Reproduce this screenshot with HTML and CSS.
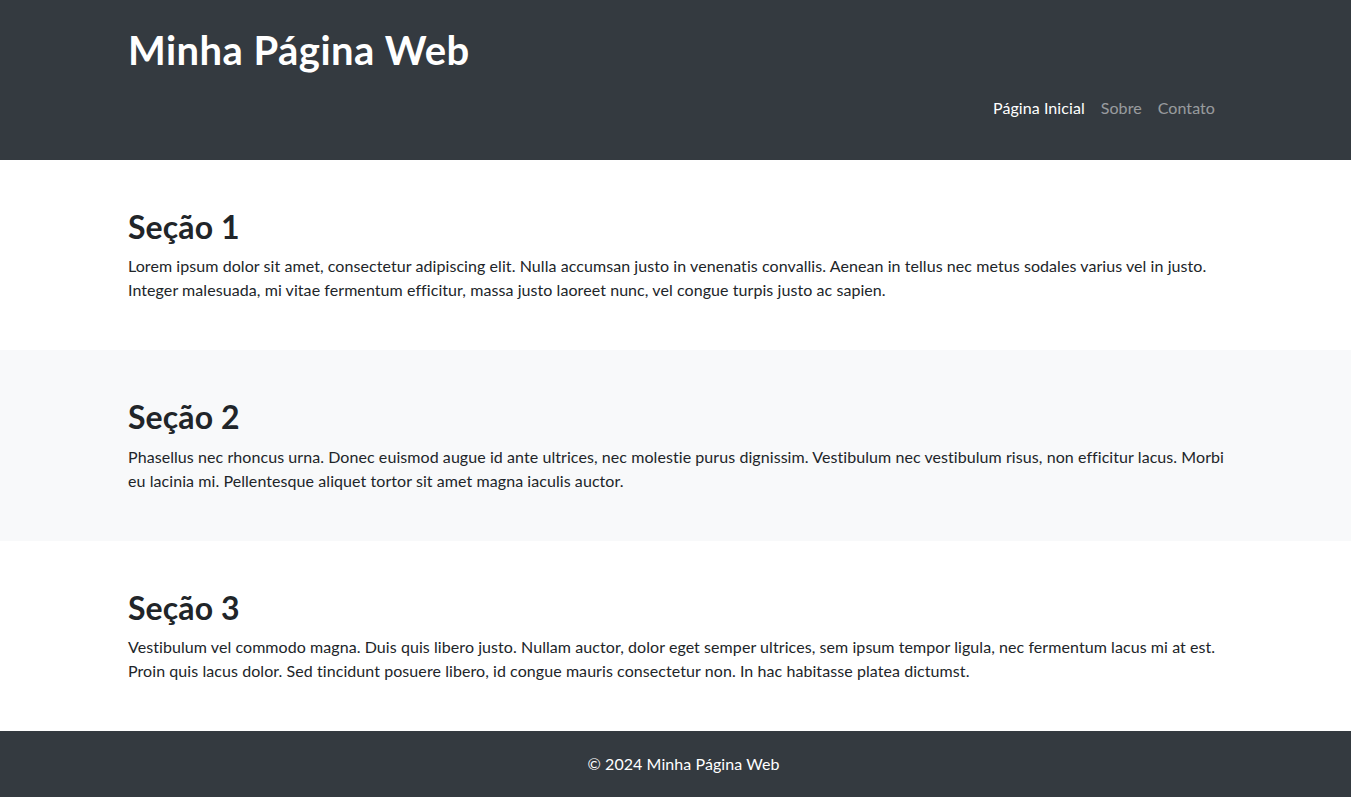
FILE: index.html
```html
<!DOCTYPE html>
<html lang="pt">
<head>
<meta charset="utf-8">
<title>Minha Página Web</title>
<link rel="stylesheet" href="styles.css">
</head>
<body>
<header class="site-header">
  <div class="container">
    <h1 class="site-title">Minha Página Web</h1>
    <nav class="nav">
      <a class="nav-link active" href="#">Página Inicial</a>
      <a class="nav-link" href="#">Sobre</a>
      <a class="nav-link" href="#">Contato</a>
    </nav>
  </div>
</header>
<main>
  <section class="section">
    <div class="container">
      <h2 class="section-title">Seção 1</h2>
      <p class="section-text">Lorem ipsum dolor sit amet, consectetur adipiscing elit. Nulla accumsan justo in venenatis convallis. Aenean in tellus nec metus sodales varius vel in justo. Integer malesuada, mi vitae fermentum efficitur, massa justo laoreet nunc, vel congue turpis justo ac sapien.</p>
    </div>
  </section>
  <section class="section section-alt">
    <div class="container">
      <h2 class="section-title">Seção 2</h2>
      <p class="section-text">Phasellus nec rhoncus urna. Donec euismod augue id ante ultrices, nec molestie purus dignissim. Vestibulum nec vestibulum risus, non efficitur lacus. Morbi eu lacinia mi. Pellentesque aliquet tortor sit amet magna iaculis auctor.</p>
    </div>
  </section>
  <section class="section">
    <div class="container">
      <h2 class="section-title">Seção 3</h2>
      <p class="section-text">Vestibulum vel commodo magna. Duis quis libero justo. Nullam auctor, dolor eget semper ultrices, sem ipsum tempor ligula, nec fermentum lacus mi at est. Proin quis lacus dolor. Sed tincidunt posuere libero, id congue mauris consectetur non. In hac habitasse platea dictumst.</p>
    </div>
  </section>
</main>
<footer class="site-footer">
  <p class="footer-text">© 2024 Minha Página Web</p>
</footer>
</body>
</html>
```
FILE: styles.css
```css
* { box-sizing: border-box; }
html, body { margin: 0; padding: 0; }
body {
  font-family: "Lato", "Open Sans", sans-serif;
  font-size: 16px;
  line-height: 24px;
  letter-spacing: 0.07px;
  color: #212529;
  background: #fff;
}
.container {
  width: 1097px;
  margin: 0 auto;
  padding-left: 1px;
}
.site-header {
  background: #343a40;
  color: #fff;
  padding: 26px 0 32px;
}
.site-title {
  margin: 0 0 14px;
  font-size: 40px;
  line-height: 48px;
  font-weight: 700;
  letter-spacing: 0.45px;
}
.nav {
  display: flex;
  justify-content: flex-end;
  padding-right: 1px;
}
.nav-link {
  display: block;
  padding: 8px;
  color: rgba(255,255,255,.5);
  text-decoration: none;
}
.nav-link.active { color: #fff; }
.section { padding: 48px 0; }
.section-alt { background: #f8f9fa; }
.section-title {
  margin: 0 0 8px;
  font-size: 32px;
  line-height: 38.4px;
  font-weight: 700;
  letter-spacing: 0.1px;
}
.section-text { margin: 0; }
.site-footer {
  background: #343a40;
  color: #fff;
  text-align: center;
  padding: 21px 0 21px 16px;
}
.footer-text { margin: 0; }
```
